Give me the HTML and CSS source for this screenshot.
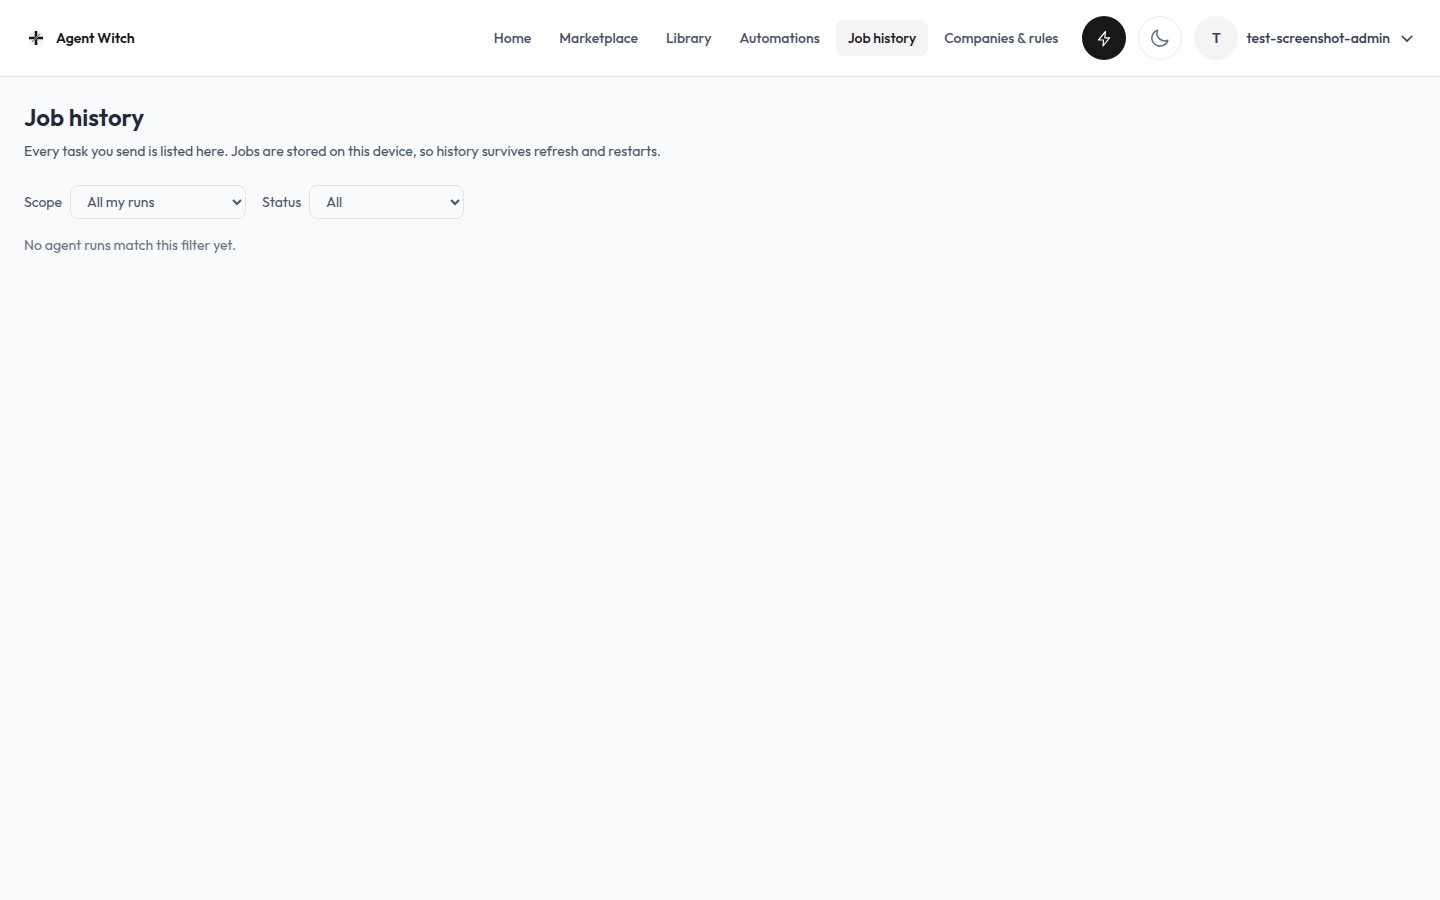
FILE: index.html
```html
<!DOCTYPE html>
<html lang="en">
<head>
  <meta charset="UTF-8" />
  <meta name="viewport" content="width=device-width, initial-scale=1.0" />
  <title>Job history - Agent Witch</title>
  <link rel="stylesheet" href="styles.css">
</head>
<body>
  <header class="navbar">
    <a class="brand" href="#">
      <svg class="brand-mark" viewBox="0 0 24 24" aria-hidden="true">
        <circle cx="12" cy="12" r="8" fill="#f1f1f3" />
        <path d="M12 5v14M5 12h14" stroke="#18181b" stroke-width="2.6" />
        <path d="M8 16l8-8" stroke="#d4d4d8" stroke-width="1.4" />
        <path d="M8 16l8-8" stroke="#52525b" stroke-width="0.8" />
      </svg>
      <span>Agent Witch</span>
    </a>
    <div class="right">
      <nav class="nav-links">
        <a href="#">Home</a>
        <a href="#">Marketplace</a>
        <a href="#">Library</a>
        <a href="#">Automations</a>
        <a href="#" class="active">Job history</a>
        <a href="#">Companies &amp; rules</a>
      </nav>
      <div class="actions">
        <button class="round dark" type="button" aria-label="Quick run">
          <svg width="18" height="18" viewBox="0 0 18 18" fill="none" stroke="currentColor" stroke-width="1.2" stroke-linecap="round" stroke-linejoin="round">
            <path d="M10.5 2.5L3.5 11H8.5L8 17L14.5 8.8H9.8z" />
          </svg>
        </button>
        <button class="round outline" type="button" aria-label="Dark mode">
          <svg width="20" height="20" viewBox="0 0 256 256" fill="none" stroke="currentColor" stroke-width="20" stroke-linecap="round" stroke-linejoin="round">
            <path d="M98 28A98 98 0 0 0 228 156 104 104 0 1 1 98 28z" />
          </svg>
        </button>
        <button class="user" type="button">
          <span class="round avatar">T</span>
          <span>test-screenshot-admin</span>
          <svg class="chevron" width="18" height="18" viewBox="0 0 256 256" fill="none" stroke="currentColor" stroke-width="22" stroke-linecap="round" stroke-linejoin="round">
            <path d="M196 104l-68 68-68-68" />
          </svg>
        </button>
      </div>
    </div>
  </header>

  <main class="page">
    <h1>Job history</h1>
    <p class="intro">Every task you send is listed here. Jobs are stored on this device, so history survives refresh and restarts.</p>
    <form class="filters">
      <div class="field">
        <label for="scope">Scope</label>
        <select id="scope" class="scope">
          <option>All my runs</option>
        </select>
      </div>
      <div class="field">
        <label for="status">Status</label>
        <select id="status" class="status">
          <option>All</option>
        </select>
      </div>
    </form>
    <p class="empty">No agent runs match this filter yet.</p>
  </main>
</body>
</html>
```
FILE: styles.css
```css
* {
  box-sizing: border-box;
}
body {
  margin: 0;
  min-height: 100vh;
  font-family: Outfit, Lato, sans-serif;
  font-size: 14px;
  line-height: 20px;
  color: #475569;
  background-color: #f8fafc;
}
a {
  color: inherit;
  text-decoration: none;
}
.navbar {
  display: flex;
  align-items: center;
  justify-content: space-between;
  padding: 16px 24px;
  background-color: white;
  border-bottom: 1px solid #e2e8f0;
}
.brand {
  display: flex;
  align-items: center;
  gap: 8px;
  color: #18181b;
  font-weight: 600;
}
.brand-mark {
  width: 24px;
  height: 24px;
}
.right, .actions, .user, .nav-links {
  display: flex;
  align-items: center;
}
.right {
  gap: 12px;
}
.nav-links {
  gap: 4px;
  font-weight: 500;
}
.nav-links a {
  padding: 8px 12px;
  border-radius: 8px;
}
.nav-links .active {
  color: #18181b;
  background-color: #f4f4f5;
}
.actions {
  gap: 12px;
}
button {
  padding: 0;
  border: none;
  background: none;
  font: inherit;
  cursor: pointer;
}
.round {
  display: flex;
  align-items: center;
  justify-content: center;
  width: 44px;
  height: 44px;
  border-radius: 50%;
}
.dark {
  color: white;
  background-color: #18181b;
}
.outline {
  color: #64748b;
  border: 1px solid #e2e8f0;
}
.avatar {
  color: #3f3f46;
  background-color: #f4f4f5;
  font-weight: 600;
}
.user {
  gap: 8px;
  color: #334155;
  font-weight: 500;
}
.page {
  padding: 24px;
}
h1 {
  margin: 0;
  font-size: 24px;
  font-weight: 600;
  line-height: 32px;
  color: #1e293b;
}
p {
  margin: 0;
}
.intro {
  margin-top: 8px;
}
.filters {
  display: flex;
  flex-wrap: wrap;
  gap: 16px;
  margin: 24px 0 16px;
}
.field {
  display: flex;
  align-items: center;
  gap: 8px;
}
select {
  height: 34px;
  padding: 0 12px;
  border: 1px solid #e4e4e7;
  border-radius: 8px;
  font: inherit;
  color: #475569;
  background-color: #f8fafc;
}
.scope {
  width: 176px;
}
.status {
  width: 155px;
}
.empty {
  color: #64748b;
}
```
